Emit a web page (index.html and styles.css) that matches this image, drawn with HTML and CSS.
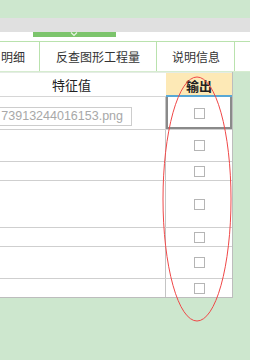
FILE: index.html
```html
<!DOCTYPE html>
<html lang="zh-CN">
<head>
    <meta charset="UTF-8">
    <meta name="viewport" content="width=device-width, initial-scale=1.0">
    <title>特征值输出</title>
    <link rel="stylesheet" href="styles.css">
</head>
<body>
    <div class="page">
        <div class="top-band"></div>
        <div class="grey-band"></div>
        <div class="handle-row">
            <div class="handle">
                <svg width="8" height="5" viewBox="0 0 8 5"><path d="M1 0.5 L4 3.5 L7 0.5" fill="none" stroke="#e8f5e4" stroke-width="1.2"/></svg>
            </div>
        </div>
        <div class="tabs">
            <div class="tab tab-first">明细</div>
            <div class="tab tab-wide">反查图形工程量</div>
            <div class="tab tab-info">说明信息</div>
            <div class="tab tab-last"></div>
        </div>
        <div class="grid-area">
            <div class="table">
                <div class="row head">
                    <div class="cell main">特征值</div>
                    <div class="cell out">输出</div>
                </div>
                <div class="row h33">
                    <div class="cell main top">
                        <div class="input">73913244016153.png</div>
                    </div>
                    <div class="cell out selected"><span class="check"></span></div>
                </div>
                <div class="row h32">
                    <div class="cell main"></div>
                    <div class="cell out"><span class="check"></span></div>
                </div>
                <div class="row h19">
                    <div class="cell main"></div>
                    <div class="cell out"><span class="check"></span></div>
                </div>
                <div class="row h47">
                    <div class="cell main"></div>
                    <div class="cell out"><span class="check"></span></div>
                </div>
                <div class="row h19">
                    <div class="cell main"></div>
                    <div class="cell out"><span class="check"></span></div>
                </div>
                <div class="row h32">
                    <div class="cell main"></div>
                    <div class="cell out"><span class="check"></span></div>
                </div>
                <div class="row h19 last">
                    <div class="cell main"></div>
                    <div class="cell out"><span class="check"></span></div>
                </div>
            </div>
        </div>
        <svg class="mark" width="74" height="250" viewBox="0 0 74 250">
            <ellipse cx="37" cy="125" rx="34" ry="122" fill="none" stroke="#f04848" stroke-width="1"/>
        </svg>
    </div>
</body>
</html>
```

FILE: styles.css
```css
body {
    margin: 0;
    padding: 0;
    background-color: #fff;
    font-family: "Liberation Sans", "Noto Sans CJK SC", sans-serif;
    font-size: 12px;
    color: #222;
}
.page {
    position: relative;
    width: 250px;
    height: 360px;
    background-color: #cde7ce;
    overflow: hidden;
}
.top-band {
    height: 18px;
}
.grey-band {
    height: 14px;
    background-color: #e0e0e0;
}
.handle-row {
    height: 9px;
    background-color: #fff;
}
.handle {
    margin-left: 33px;
    width: 83px;
    height: 5px;
    background-color: #7cc46c;
    display: flex;
    justify-content: center;
    align-items: flex-start;
}
.handle svg {
    display: block;
    margin-left: -2px;
}
.tabs {
    display: flex;
    height: 29px;
    background-color: #fff;
    border-top: 1px solid #b9e2ad;
    border-bottom: 1px solid #d6ecd0;
}
.tab {
    flex: none;
    display: flex;
    align-items: center;
    justify-content: center;
    padding: 0 15px;
    border-right: 1px solid #b9e2ad;
    color: #333;
    font-size: 12px;
}
.tab-first {
    width: 40px;
    box-sizing: border-box;
    justify-content: flex-start;
    padding: 0 0 0 1px;
}
.tab-wide {
    padding: 0 16px;
}
.tab-info {
    padding: 0 14px 0 15px;
}
.tab-last {
    width: 60px;
    border-right: none;
}
.grid-area {
    padding-right: 18px;
}
.table {
    margin-left: -23px;
    width: 255px;
    background-color: #fff;
    border-right: 1px solid #bdbdbd;
    border-bottom: 1px solid #bdbdbd;
}
.row {
    display: flex;
    box-sizing: border-box;
    border-bottom: 1px solid #cfcfcf;
}
.row.last {
    border-bottom: none;
}
.cell {
    box-sizing: border-box;
}
.main {
    width: 189px;
    border-right: 1px solid #c4c4c4;
}
.out {
    flex: 1;
    display: flex;
    align-items: center;
    justify-content: center;
}
.head {
    height: 25px;
    border-top: 1px solid #e4ece4;
    border-bottom: none;
}
.head .main {
    display: flex;
    align-items: center;
    justify-content: center;
    border-bottom: 1px solid #d6d6d6;
    border-right: none;
    font-size: 13px;
}
.head .out {
    background-color: #fde9b6;
    border-bottom: 2px solid #58a8d6;
    font-weight: bold;
    font-size: 13px;
    padding-top: 2px;
}
.h33 { height: 33px; }
.h32 { height: 32px; }
.h19 { height: 19px; }
.h47 { height: 47px; }
.last.h19 { height: 18px; }
.main.top {
    padding: 10px 0 0 0;
}
.input {
    box-sizing: border-box;
    width: 155px;
    height: 19px;
    border: 1px solid #cdcdcd;
    border-left: none;
    padding-right: 8px;
    text-align: right;
    line-height: 17px;
    font-size: 12.5px;
    color: #a8a8a8;
    white-space: nowrap;
    overflow: hidden;
}
.selected {
    box-shadow: inset 2px 0 #8a8a8a, inset -2px 0 #8a8a8a, inset 0 -2px #8a8a8a;
}
.check {
    display: block;
    width: 11px;
    height: 11px;
    box-sizing: border-box;
    border: 1px solid #b5b5b5;
    background-color: #fff;
}
.mark {
    position: absolute;
    left: 160px;
    top: 74px;
}
```
